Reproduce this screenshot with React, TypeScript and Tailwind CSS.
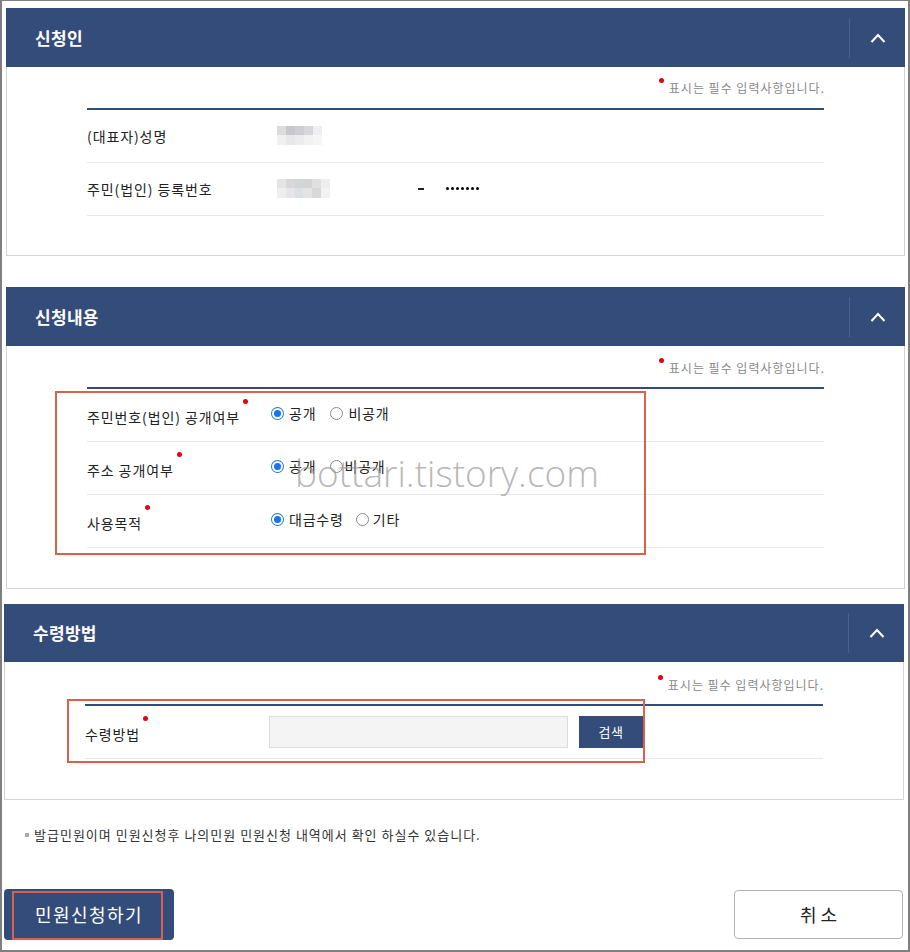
import React from "react";

const FONT = { fontFamily: '"Noto Sans CJK KR", "Noto Sans", "Liberation Sans", sans-serif' };

function Chevron() {
  return (
    <svg width="16" height="10" viewBox="0 0 16 10" fill="none">
      <polyline points="1.5,9 8,2 14.5,9" stroke="#ffffff" strokeWidth="2" fill="none" />
    </svg>
  );
}

function Header({ title, h = "h-[59px]" }: { title: string; h?: string }) {
  return (
    <div className={`${h} bg-[#344c79] flex items-center justify-between`}>
      <div className="pl-[29px] text-white text-[17px] font-bold tracking-[0.3px]">{title}</div>
      <div className="flex items-center h-full">
        <div className="w-px h-[40px] bg-[#4a6190]" />
        <div className="w-[55px] flex items-center justify-center">
          <Chevron />
        </div>
      </div>
    </div>
  );
}

function RequiredNote({ pt }: { pt: string }) {
  return (
    <div className={`${pt} flex justify-end`}>
      <span className="relative pl-[10px] text-[12px] leading-[18px] text-[#888] tracking-[1px] -mr-[1px]">
        <span className="absolute left-0 top-[-1px] w-[5px] h-[5px] rounded-full bg-[#e60012]" />
        표시는 필수 입력사항입니다.
      </span>
    </div>
  );
}

function ReqLabel({ children }: { children: React.ReactNode }) {
  return (
    <span className="relative inline-block">
      {children}
      <span className="absolute right-[-8px] top-[-8px] w-[5px] h-[5px] rounded-full bg-[#e60012]" />
    </span>
  );
}

function Radio({ checked }: { checked?: boolean }) {
  return checked ? (
    <span className="inline-flex w-[13px] h-[13px] rounded-full bg-[#1a73e8] items-center justify-center">
      <span className="w-[11px] h-[11px] rounded-full bg-white flex items-center justify-center">
        <span className="w-[7px] h-[7px] rounded-full bg-[#1a73e8]" />
      </span>
    </span>
  ) : (
    <span className="inline-block w-[13px] h-[13px] rounded-full border border-[#8a8a8a] bg-white" />
  );
}

function Row({ label, labelW, children, req }: { label: string; labelW: string; children?: React.ReactNode; req?: boolean }) {
  return (
    <div className="flex items-center h-[53px] border-b border-[#e8e8e8]">
      <div className={`${labelW} text-[14px] text-[#222] tracking-[0.9px] ${req ? "translate-y-[2px]" : ""}`}>
        {req ? <ReqLabel>{label}</ReqLabel> : label}
      </div>
      <div className={`flex items-center text-[14px] text-[#222] tracking-[0.8px] ${req ? "-translate-y-[2px]" : ""}`}>{children}</div>
    </div>
  );
}

export default function App() {
  return (
    <div style={FONT} className="w-[910px] h-[952px] bg-white border-t border-l-2 border-r-2 border-b-2 border-[#7f7f7f] overflow-hidden">
      <div className="pt-[7px] pl-[4px] pr-[3px]">
        {/* Section 1 */}
        <div>
          <Header title="신청인" />
          <div className="h-[189px] border-l border-r border-b border-[#d4d4d4] px-[80px]">
            <RequiredNote pt="pt-[12px]" />
            <div className="mt-[11px] h-[2px] bg-[#344c79]" />
            <Row label="(대표자)성명" labelW="w-[190px]">
              <div className="grid grid-cols-5 w-[45px] h-[19px] -translate-y-[1px]">
                <div className="bg-[#dcdcdc]" /><div className="bg-[#c8c8cc]" /><div className="bg-[#cfcfd2]" /><div className="bg-[#d8d8da]" /><div className="bg-[#efefef]" />
                <div className="bg-[#f0f0f0]" /><div className="bg-[#e8e8ea]" /><div className="bg-[#ececee]" /><div className="bg-[#f2f2f2]" /><div className="bg-[#f6f6f6]" />
              </div>
            </Row>
            <Row label="주민(법인) 등록번호" labelW="w-[190px]">
              <div className="grid grid-cols-6 w-[53px] h-[19px] -translate-y-[1px]">
                <div className="bg-[#e6e3e3]" /><div className="bg-[#d8d8d8]" /><div className="bg-[#d3d6d6]" /><div className="bg-[#d6d3d3]" /><div className="bg-[#dfe0e0]" /><div className="bg-[#eeeeee]" />
                <div className="bg-[#eeeeee]" /><div className="bg-[#e6e6e6]" /><div className="bg-[#dde0e0]" /><div className="bg-[#e4e4e4]" /><div className="bg-[#d8d8da]" /><div className="bg-[#f2f2f2]" />
              </div>
              <div className="ml-[88px] w-[6px] h-[2px] bg-[#222]" />
              <div className="ml-[22px] flex gap-[2px] -translate-y-[1px]">
                <span className="w-[3px] h-[3px] rounded-full bg-black" />
                <span className="w-[3px] h-[3px] rounded-full bg-black" />
                <span className="w-[3px] h-[3px] rounded-full bg-black" />
                <span className="w-[3px] h-[3px] rounded-full bg-black" />
                <span className="w-[3px] h-[3px] rounded-full bg-black" />
                <span className="w-[3px] h-[3px] rounded-full bg-black" />
                <span className="w-[3px] h-[3px] rounded-full bg-black" />
              </div>
            </Row>
          </div>
        </div>

        {/* Section 2 */}
        <div className="mt-[31px]">
          <Header title="신청내용" />
          <div className="relative h-[243px] border-l border-r border-b border-[#d4d4d4] px-[80px]">
            <RequiredNote pt="pt-[13px]" />
            <div className="mt-[10px] h-[2px] bg-[#344c79]" />
            <Row label="주민번호(법인) 공개여부" labelW="w-[184px]" req>
              <Radio checked />
              <span className="ml-[5px]">공개</span>
              <span className="ml-[14px] flex"><Radio /></span>
              <span className="ml-[5px]">비공개</span>
            </Row>
            <Row label="주소 공개여부" labelW="w-[184px]" req>
              <Radio checked />
              <span className="ml-[5px]">공개</span>
              <span className="ml-[14px] flex"><Radio /></span>
              <span className="ml-[1px]">비공개</span>
            </Row>
            <Row label="사용목적" labelW="w-[184px]" req>
              <Radio checked />
              <span className="ml-[5px]">대금수령</span>
              <span className="ml-[12px] flex"><Radio /></span>
              <span className="ml-[4px]">기타</span>
            </Row>
            <div className="absolute left-[48px] top-[45px] w-[591px] h-[164px] border-2 border-[#d9634a] pointer-events-none" />
            <div
              className="absolute left-[288px] top-[108px] text-[37px] leading-none font-light text-[#9a9a9a] opacity-70 pointer-events-none whitespace-nowrap"
              style={{ fontFamily: '"Open Sans", sans-serif' }}
            >
              bottari.tistory.com
            </div>
          </div>
        </div>

        {/* Section 3 */}
        <div className="mt-[15px] -ml-[2px] mr-[1px]">
          <Header title="수령방법" h="h-[58px]" />
          <div className="relative h-[138px] border-l border-r border-b border-[#d4d4d4] px-[80px]">
            <RequiredNote pt="pt-[14px]" />
            <div className="mt-[10px] h-[2px] bg-[#344c79]" />
            <Row label="수령방법" labelW="w-[184px]" req>
              <div className="w-[299px] h-[32px] bg-[#f4f4f4] border border-[#dcdcdc] translate-y-[2px]" />
              <div className="ml-[11px] w-[64px] h-[32px] bg-[#344c79] text-white text-[13px] tracking-[0.5px] flex items-center justify-center translate-y-[2px]">
                검색
              </div>
            </Row>
            <div className="absolute left-[62px] top-[37px] w-[578px] h-[64px] border-2 border-[#d9634a] pointer-events-none" />
          </div>
        </div>

        {/* Note */}
        <div className="mt-[25px] flex items-center pl-[19px] h-[20px]">
          <span className="w-[4px] h-[4px] bg-[#aaaaaa] mr-[5px]" />
          <span className="text-[13px] text-[#333] tracking-[1px]">발급민원이며 민원신청후 나의민원 민원신청 내역에서 확인 하실수 있습니다.</span>
        </div>
      </div>

      {/* Buttons */}
      <div className="mt-[44px] flex justify-between items-start pl-[2px] pr-[5px]">
        <div className="relative w-[170px] h-[51px] rounded-[4px] bg-[#344c79] flex items-center justify-center text-white text-[18px] tracking-[1.4px]">
          <div className="absolute left-[8px] top-[2px] w-[151px] h-[49px] border-2 border-[#d9634a]" />
          민원신청하기
        </div>
        <div className="mt-[1px] w-[169px] h-[49px] rounded-[4px] border border-[#b3b3b3] bg-white flex items-center justify-center text-[18px] text-[#222] tracking-[4px] pl-[4px]">
          취소
        </div>
      </div>
    </div>
  );
}
